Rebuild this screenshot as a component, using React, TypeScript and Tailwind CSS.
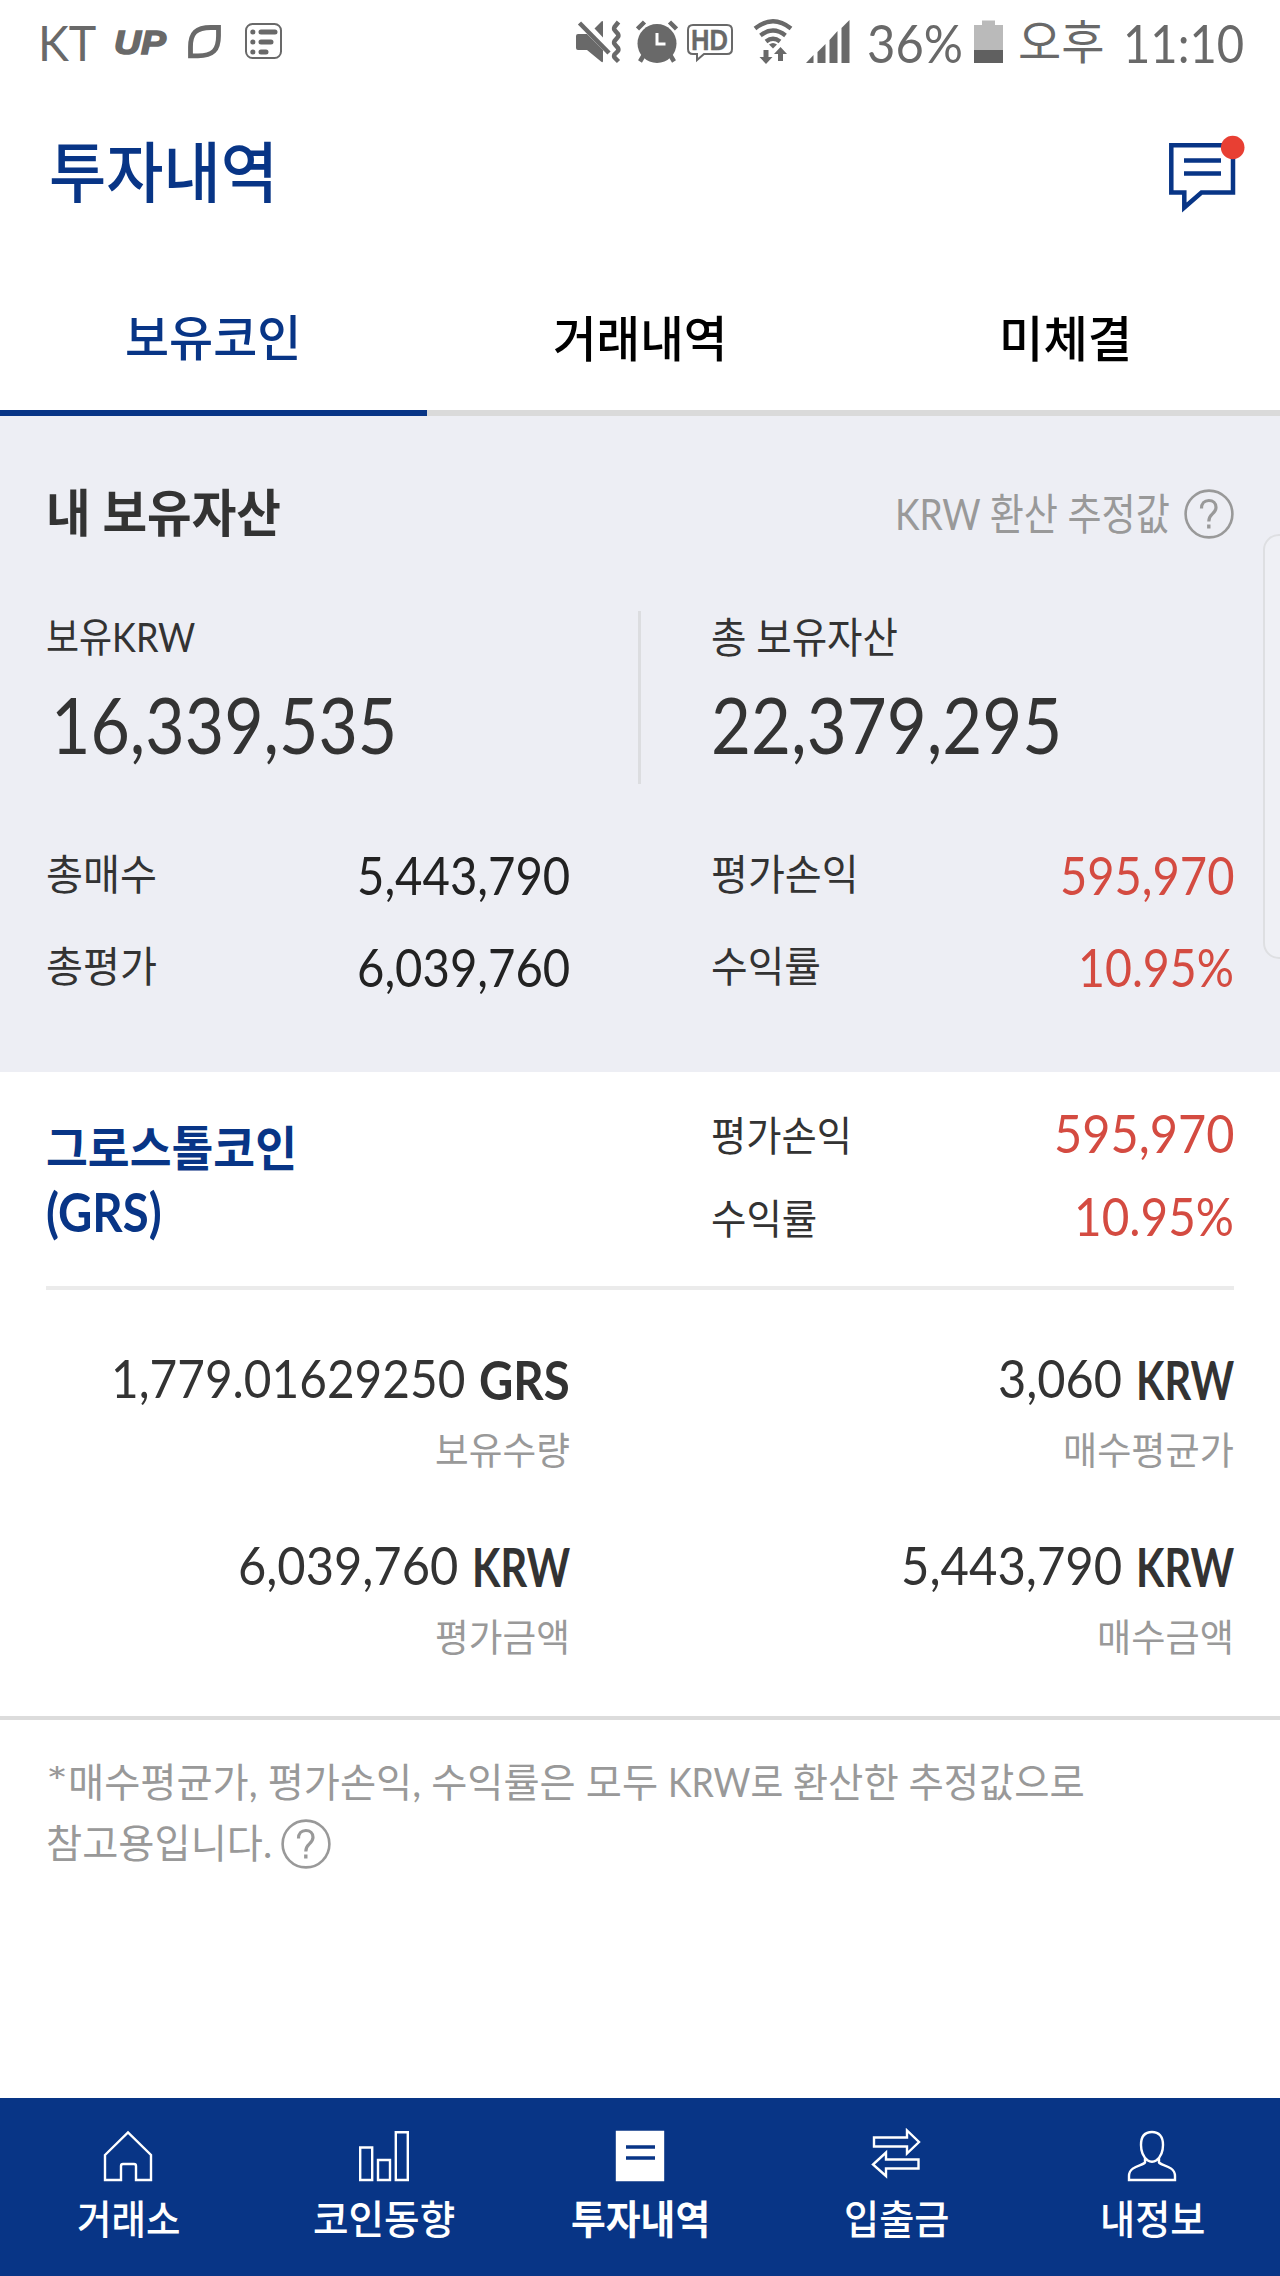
import { useLayoutEffect, useRef, useState, type ReactNode } from "react";

const NAVY = "#083586";
const STATUS = "#696969";

// Condenses (or widens) its text so that it fills the width given in className
function Fit({ children, className = "" }: { children: ReactNode; className?: string }) {
  const box = useRef<HTMLSpanElement>(null);
  const text = useRef<HTMLSpanElement>(null);
  const [scale, setScale] = useState(1);

  useLayoutEffect(() => {
    if (!box.current || !text.current) return;
    setScale(box.current.clientWidth / text.current.offsetWidth);
  }, [children]);

  return (
    <span ref={box} className={`block shrink-0 whitespace-nowrap pb-[3px] leading-none ${className}`}>
      <span ref={text} className="inline-block origin-left whitespace-pre" style={{ transform: `scaleX(${scale})` }}>
        {children}
      </span>
    </span>
  );
}

function HelpIcon({ className = "" }: { className?: string }) {
  return (
    <svg viewBox="0 0 50 50" className={`h-[50px] w-[50px] shrink-0 ${className}`} fill="none" stroke="#999" strokeWidth="2.6">
      <circle cx="25" cy="25" r="23.4" />
      <path d="M17.5 19.5c0-5 3-8 7.3-8s7.2 2.7 7.2 6.8c0 3-1.5 4.8-3.8 6.8-2.3 2-3.4 3.4-3.4 7.4" strokeWidth="3.2" />
      <path d="M24.8 35.5v4" strokeWidth="3.4" />
    </svg>
  );
}

function StatusBar() {
  return (
    <div className="flex h-[82px] items-center pl-[38px] pr-[36px] text-[#696969]">
      <Fit className="w-[58px] pt-[6px] text-[49px]">KT</Fit>
      <Fit className="ml-[18px] w-[52px] pt-[5px] font-['Liberation_Sans'] text-[33px] font-bold italic [-webkit-text-stroke:1.5px_#696969]">UP</Fit>
      <svg viewBox="0 0 33 46" className="ml-[22px] h-[46px] w-[33px]" fill="none" stroke={STATUS} strokeWidth="4.8">
        <path d="M30.500 9.500V18C30.500 32 25 37.800 10 37.800H2.500V29C2.500 15 8 9.500 23 9.500Z" />
      </svg>
      <svg viewBox="0 0 37 46" className="ml-[24px] h-[46px] w-[37px]" fill="none" stroke={STATUS}>
        <rect x="1" y="6" width="35" height="34" rx="6.5" strokeWidth="2" />
        <path d="M16 14h14M16 24h10M16 34h5" strokeWidth="5" strokeLinecap="round" />
        <path d="M7.8 14h.1M7.8 24h.1M7.8 34h.1" strokeWidth="5" strokeLinecap="round" />
      </svg>

      {/* mute + vibrate */}
      <svg viewBox="0 0 46 46" className="ml-auto h-[46px] w-[46px]" fill={STATUS}>
        <path d="M2 16h9L27 32v11q0 2-2 .5L11 32H2q-2 0-2-2V18q0-2 2-2Z" />
        <path d="M27 19.500 18.500 10.500 25.500 3.500q1.500-1 1.500.5Z" />
        <path d="M3.500 5 33 35" stroke={STATUS} strokeWidth="4.500" />
        <path d="m42.500 4-4 5q-1 2 .5 3.500l3 3.500q1 2-.5 3.500l-3 3.500q-1 2 .5 3.500l3 3.500q1 2-.5 3.500l-3 3q-1 2 .5 3.500l3.500 3.500" fill="none" stroke={STATUS} strokeWidth="4.500" />
      </svg>
      <svg viewBox="0 0 42 46" className="ml-[14px] h-[46px] w-[42px]" fill={STATUS}>
        <circle cx="21" cy="25.500" r="19.500" />
        <path d="m1.500 11 7-7M40.500 11l-7-7M7.500 37.500l-3.500 6M34.500 37.500l3.500 6" stroke={STATUS} strokeWidth="4.500" />
        <path d="M21 15v11h8.500" fill="none" stroke="#fff" strokeWidth="3" />
      </svg>
      <svg viewBox="0 0 46 46" className="ml-[9px] h-[46px] w-[46px]" fill="none" stroke={STATUS} strokeWidth="2">
        <path d="M6 7h34q5 0 5 5v19q0 5-5 5H17l-7 6v-6H6q-5 0-5-5V12q0-5 5-5Z" />
        <text x="4" y="31.500" textLength="37" lengthAdjust="spacingAndGlyphs" fill={STATUS} strokeWidth="0.3" className="font-['Liberation_Sans'] text-[29px] font-bold">HD</text>
      </svg>
      <svg viewBox="0 0 40 46" className="ml-[20px] h-[46px] w-[40px]" fill="none" stroke={STATUS} strokeWidth="4.3">
        <path d="M2 10.500Q20-4 38 10.500M7.500 17.500q12.500-10 25 0M13 23.500q7-5.500 14 0" />
        <path d="m16 26.500 4 4 4-4q-4-3-8 0Z" fill={STATUS} stroke="none" />
        <path d="M10.500 32h5v7h4l-6.500 7L6.500 39h4ZM25 43v-7h-4l6.500-7L34 36h-4v7Z" fill={STATUS} stroke="none" />
      </svg>
      <svg viewBox="0 0 44 46" className="ml-[13px] h-[46px] w-[44px]" fill={STATUS}>
        <path d="M0 45 7.500 37v8ZM11.500 34l8-8v19h-8ZM23.500 22l8-9v32h-8ZM35.500 10 43.500 2v43h-8Z" />
      </svg>
      <Fit className="ml-[17px] w-[96px] pt-[6px] text-[53px]">36%</Fit>
      <svg viewBox="0 0 29 46" className="ml-[11px] h-[46px] w-[29px]">
        <path d="M0 7h8V2.500h13V7h8v25H0Z" fill="#bababa" />
        <path d="M0 32h29v13H0Z" fill="#606060" />
      </svg>
      <Fit className="ml-[15px] w-[86px] pt-[3px] text-[47px]">오후</Fit>
      <Fit className="ml-[19px] w-[121px] pt-[6px] text-[53px]">11:10</Fit>
    </div>
  );
}

function Header() {
  return (
    <div className="flex h-[190px] items-center justify-between pl-[49px] pr-[33px] text-[#083586]">
      <Fit className="w-[229px] pb-[10px] text-[66px] font-medium">투자내역</Fit>
      <svg viewBox="0 0 80 84" className="h-[84px] w-[80px]" fill="none" stroke={NAVY} strokeWidth="4.5">
        <path d="M4.300 10.300H66V57.500H34.500L17.300 72.500V57.500H4.300Z" />
        <path d="M17 25.500h37M17 38.500h37" />
        <circle cx="65.700" cy="12.500" r="11.800" fill="#e83f33" stroke="none" />
      </svg>
    </div>
  );
}

function Tabs() {
  return (
    <div className="grid h-[144px] grid-cols-3 text-[49px] font-medium">
      <div className="flex items-center justify-center border-b-[6px] border-[#083586] text-[#083586]">
        <Fit className="w-[176px] pb-[8px]">보유코인</Fit>
      </div>
      <div className="flex items-center justify-center border-b-[6px] border-[#dadada] text-black">
        <Fit className="w-[174px] pb-[6px]">거래내역</Fit>
      </div>
      <div className="flex items-center justify-center border-b-[6px] border-[#dadada] pr-[3px] text-black">
        <Fit className="w-[133px] pb-[6px]">미체결</Fit>
      </div>
    </div>
  );
}

function Row({ label, value, labelClass, valueClass }: {
  label: string; value: string; labelClass: string; valueClass: string;
}) {
  return (
    <div className="flex h-[60px] items-center justify-between">
      <Fit className={`text-[#333] ${labelClass}`}>{label}</Fit>
      <Fit className={`text-[53px] ${valueClass}`}>{value}</Fit>
    </div>
  );
}

function Assets() {
  return (
    <section className="relative h-[656px] overflow-hidden bg-[#edeef4] pl-[46px] pr-[46px] pt-[68px]">
      <div className="flex h-[60px] items-center">
        <Fit className="w-[235px] text-[51px] font-bold text-[#333]">내 보유자산</Fit>
        <Fit className="ml-auto w-[275px] pt-[2px] text-[43px] text-[#999]">KRW 환산 추정값</Fit>
        <HelpIcon className="ml-[14px]" />
      </div>

      <div className="mt-[67px] flex h-[173px]">
        <div className="w-[595px] border-r-[3px] border-[#dcdde0]">
          <div className="flex h-[54px] items-center">
            <Fit className="w-[149px] text-[41px] text-[#333]">보유KRW</Fit>
          </div>
          <div className="mt-[28px] flex h-[64px] items-center">
            <Fit className="ml-[5px] w-[346px] text-[78px] text-[#333]">16,339,535</Fit>
          </div>
        </div>
        <div className="pl-[70px]">
          <div className="flex h-[54px] items-center">
            <Fit className="w-[187px] text-[42px] text-[#333]">총 보유자산</Fit>
          </div>
          <div className="mt-[28px] flex h-[64px] items-center">
            <Fit className="w-[351px] text-[78px] text-[#333]">22,379,295</Fit>
          </div>
        </div>
      </div>

      <div className="mt-[61px] flex justify-between">
        <div className="flex w-[524px] flex-col gap-8">
          <Row label="총매수" value="5,443,790" labelClass="w-[111px] text-[42px]" valueClass="w-[213px] pt-[2px] text-[#222]" />
          <Row label="총평가" value="6,039,760" labelClass="w-[111px] text-[42px]" valueClass="w-[213px] pt-[2px] text-[#222]" />
        </div>
        <div className="flex w-[523px] flex-col gap-8">
          <Row label="평가손익" value="595,970" labelClass="w-[148px] text-[42px]" valueClass="w-[174px] pt-[2px] text-[#d44b41]" />
          <Row label="수익률" value="10.95%" labelClass="w-[110px] text-[42px]" valueClass="w-[156px] pt-[2px] text-[#d44b41]" />
        </div>
      </div>

      {/* edge panel handle */}
      <div className="absolute right-[-30px] top-[118px] h-[425px] w-[47px] rounded-[16px] border-2 border-[#dedfe2] bg-[#eff0f5]" />
    </section>
  );
}

function Amount({ value, unit, label, valueWidth, unitWidth, labelWidth }: {
  value: string; unit: string; label: string; valueWidth: string; unitWidth: string; labelWidth: string;
}) {
  return (
    <div className="flex flex-col items-end">
      <div className="flex h-[60px] items-center gap-[14px] text-[53px] text-[#333]">
        <Fit className={valueWidth}>{value}</Fit>
        <Fit className={`pt-[3px] font-bold ${unitWidth}`}>{unit}</Fit>
      </div>
      <div className="mt-[16px] flex h-[50px] items-center text-[38px] text-[#999]">
        <Fit className={labelWidth}>{label}</Fit>
      </div>
    </div>
  );
}

function Coin() {
  return (
    <section className="pl-[46px] pr-[46px]">
      <div className="flex h-[214px] justify-between">
        <div className="pt-[47px] font-bold text-[#083586]">
          <div className="flex h-[60px] items-center">
            <Fit className="w-[251px] text-[48px]">그로스톨코인</Fit>
          </div>
          <div className="mt-[4px] flex h-[60px] items-center">
            <Fit className="w-[116px] text-[53px]">(GRS)</Fit>
          </div>
        </div>
        <div className="flex w-[523px] flex-col gap-[23px] pt-[32px]">
          <Row label="평가손익" value="595,970" labelClass="w-[141px] pt-[6px] text-[41px]" valueClass="w-[180px] text-[#d44b41]" />
          <Row label="수익률" value="10.95%" labelClass="w-[106px] pt-[6px] text-[41px]" valueClass="w-[160px] text-[#d44b41]" />
        </div>
      </div>
      <div className="h-[4px] bg-[#ebebeb]" />
      <div className="mt-[59px] grid grid-cols-[524px_1fr] gap-y-[61px]">
        <Amount value="1,779.01629250" unit="GRS" label="보유수량" valueWidth="w-[354px]" unitWidth="w-[91px]" labelWidth="w-[135px]" />
        <Amount value="3,060" unit="KRW" label="매수평균가" valueWidth="w-[124px]" unitWidth="w-[98px]" labelWidth="w-[171px]" />
        <Amount value="6,039,760" unit="KRW" label="평가금액" valueWidth="w-[220px]" unitWidth="w-[98px]" labelWidth="w-[135px]" />
        <Amount value="5,443,790" unit="KRW" label="매수금액" valueWidth="w-[221px]" unitWidth="w-[98px]" labelWidth="w-[137px]" />
      </div>
    </section>
  );
}

function Note() {
  return (
    <div className="mt-[54px] border-t-[4px] border-[#dcdcdc] px-[46px] pt-[38px] text-[40px] text-[#999]">
      <div className="flex h-[50px] items-center">
        <Fit className="w-[22px]">*</Fit>
        <Fit className="w-[600px]">{"매수평균가, 평가손익, 수익률은 모두 "}</Fit>
        <Fit className="w-[115px]">KRW로</Fit>
        <Fit className="w-[302px]">{" 환산한 추정값으로"}</Fit>
      </div>
      <div className="mt-[11px] flex h-[50px] items-center">
        <Fit className="w-[226px]">참고용입니다.</Fit>
        <HelpIcon className="ml-[9px]" />
      </div>
    </div>
  );
}

const NAV = [
  {
    label: "거래소",
    width: "w-[103px]",
    icon: <path d="M2 27 25 4.500 48 27v25H33V38q0-2-2-2H20q-2 0-2 2v14H2Z" />,
  },
  {
    label: "코인동향",
    width: "w-[142px]",
    icon: <path d="M1.200 19.500h12v32.500h-12ZM19 32h12v20H19ZM36.800 4.200h12V52h-12Z" />,
  },
  {
    label: "투자내역",
    width: "w-[139px]",
    active: true,
    icon: (
      <>
        <path d="M2 4h46v48H2Z" fill="#fff" />
        <path d="M11 19h29M11 30h29" stroke={NAVY} strokeWidth="3.5" />
      </>
    ),
  },
  {
    label: "입출금",
    width: "w-[105px]",
    icon: <path d="M3 9.500h33V2.500L48 14 36 25.500V18.500H3ZM47.500 31.500H15V24.500L2 36.500 15 48V40.500h32.500Z" />,
  },
  {
    label: "내정보",
    width: "w-[105px]",
    icon: (
      <path d="M25 4c-7 0-11 4.500-11 13 0 7 3 12.500 6.500 15.200q4.500 3 9 0C33 29.500 36 24 36 17 36 8.500 32 4 25 4ZM18 30v4.500c-2 3-16 3.500-16 13.500v4h46v-4c0-10-14-10.500-16-13.500V30" />
    ),
  },
];

function BottomNav() {
  return (
    <nav className="mt-auto grid h-[178px] grid-cols-5 bg-[#083586] pt-[30px] text-[40px] text-white">
      {NAV.map((n) => (
        <div key={n.label} className="flex flex-col items-center">
          <svg viewBox="0 0 50 54" className="h-[54px] w-[50px]" fill="none" stroke="#fff" strokeWidth="2.4">
            {n.icon}
          </svg>
          <div className={`mt-[13px] flex h-[50px] items-center ${n.active ? "font-bold" : "font-medium"}`}>
            <Fit className={n.width}>{n.label}</Fit>
          </div>
        </div>
      ))}
    </nav>
  );
}

export default function App() {
  return (
    <div className="flex h-[2276px] w-[1280px] flex-col overflow-hidden bg-white font-['Lato','Noto_Sans_CJK_KR',sans-serif]">
      <StatusBar />
      <Header />
      <Tabs />
      <Assets />
      <Coin />
      <Note />
      <BottomNav />
    </div>
  );
}
